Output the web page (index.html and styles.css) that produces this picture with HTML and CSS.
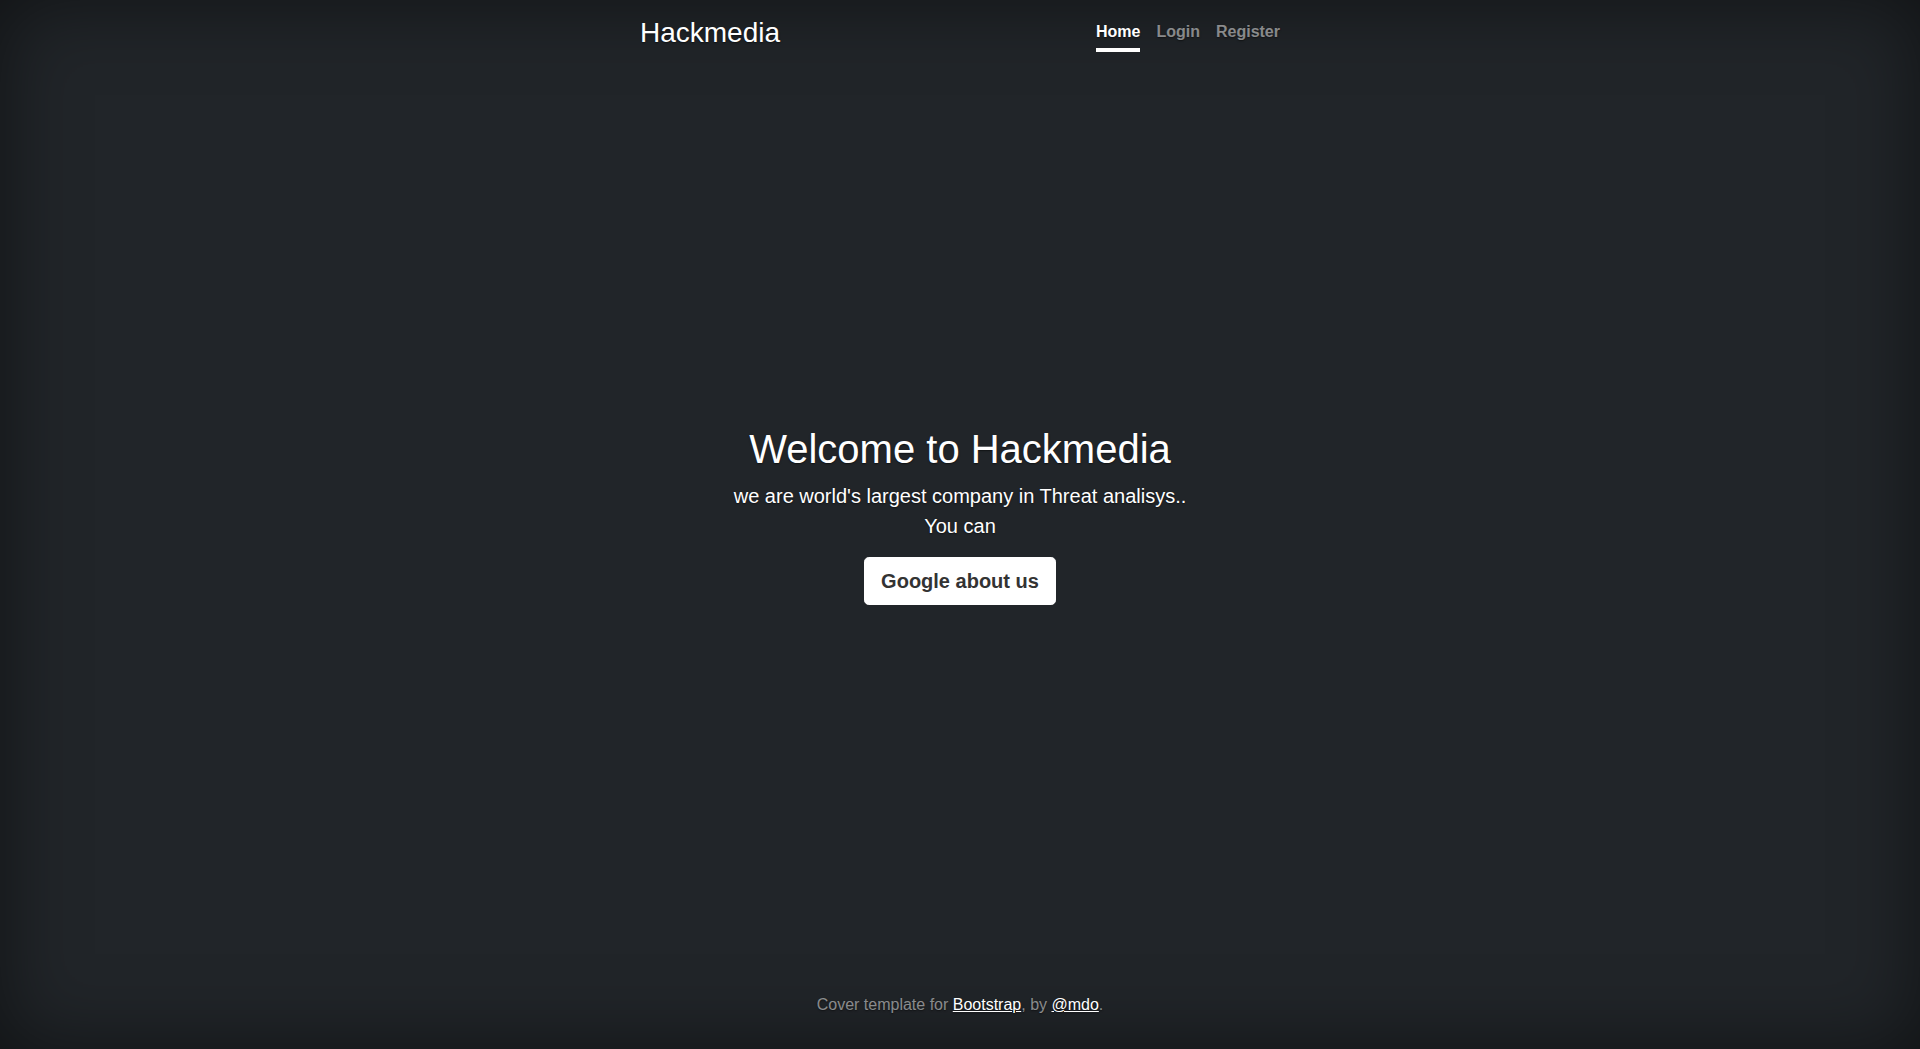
FILE: index.html
```html
<!DOCTYPE html>
<html lang="en">
<head>
  <meta charset="UTF-8">
  <meta name="viewport" content="width=device-width, initial-scale=1">
  <title>Hackmedia</title>
  <link rel="stylesheet" href="styles.css">
</head>
<body>

<div class="cover-container">

  <!-- Masthead -->
  <header class="masthead">
    <h3 class="brand">Hackmedia</h3>
    <nav class="nav-masthead">
      <a class="nav-link active" href="#">Home</a>
      <a class="nav-link" href="#">Login</a>
      <a class="nav-link" href="#">Register</a>
    </nav>
  </header>

  <!-- Cover content -->
  <main class="cover">
    <h1>Welcome to Hackmedia</h1>
    <p class="lead">we are world's largest company in Threat analisys..<br>You can</p>
    <p class="lead">
      <a href="#" class="btn-cover">Google about us</a>
    </p>
  </main>

  <footer class="mastfoot">
    <p>Cover template for <a href="#">Bootstrap</a>, by <a href="#">@mdo</a>.</p>
  </footer>

</div>

</body>
</html>
```

FILE: styles.css
```css
* { box-sizing: border-box; }

html, body {
  height: 100%;
}

body {
  margin: 0;
  display: flex;
  font-family: "Liberation Sans", Arial, sans-serif;
  font-size: 16px;
  line-height: 1.5;
  color: #fff;
  background-color: #212529;
  text-shadow: 0 .05rem .1rem rgba(0, 0, 0, .5);
  box-shadow: inset 0 0 5rem rgba(0, 0, 0, .5);
}

a {
  color: #fff;
}

.cover-container {
  display: flex;
  flex-direction: column;
  width: 100%;
  max-width: 42em;
  height: 100%;
  margin: 0 auto;
  padding: 1rem;
}

/* Header */
.masthead {
  display: flex;
  justify-content: space-between;
  align-items: flex-start;
  margin-bottom: auto;
}

.brand {
  margin: 0;
  font-size: 28px;
  font-weight: 400;
  line-height: 1.2;
}

.nav-masthead {
  display: flex;
}

.nav-link {
  padding: .25rem 0;
  font-weight: 700;
  color: rgba(255, 255, 255, .5);
  text-decoration: none;
  border-bottom: .25rem solid transparent;
}

.nav-link + .nav-link {
  margin-left: 1rem;
}

.nav-link.active {
  color: #fff;
  border-bottom-color: #fff;
}

/* Cover */
.cover {
  padding: 0 1rem;
  text-align: center;
}

.cover h1 {
  margin: 0 0 .5rem;
  font-size: 40px;
  font-weight: 400;
  line-height: 1.2;
}

.lead {
  margin: 0 0 1rem;
  font-size: 20px;
  font-weight: 300;
}

.btn-cover {
  display: inline-block;
  padding: .5rem 1rem;
  font-size: 20px;
  font-weight: 700;
  line-height: 1.5;
  color: #333;
  text-decoration: none;
  text-shadow: none;
  background: #fff;
  border: 1px solid #fff;
  border-radius: .3rem;
  vertical-align: top;
}

/* Footer */
.mastfoot {
  margin-top: auto;
  text-align: center;
  color: rgba(255, 255, 255, .5);
}

.mastfoot p {
  margin: 0 0 1rem;
}
```
